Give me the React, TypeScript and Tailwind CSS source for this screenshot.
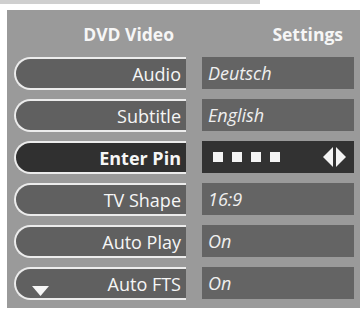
const rows = [
  { label: 'Audio', value: 'Deutsch' },
  { label: 'Subtitle', value: 'English' },
  { label: 'Enter Pin', value: '', active: true },
  { label: 'TV Shape', value: '16:9' },
  { label: 'Auto Play', value: 'On' },
  { label: 'Auto FTS', value: 'On', more: true },
];

function PinValue() {
  return (
    <div className="flex h-full items-center justify-between pl-[11px] pr-[8px]">
      <div className="flex gap-[9px]">
        {[0, 1, 2, 3].map((i) => (
          <div key={i} className="h-[10px] w-[10px] bg-[#f4f4f4]" />
        ))}
      </div>
      <svg width="23" height="20" viewBox="0 0 23 20">
        <polygon points="0,10 10,0 10,20" fill="#f4f4f4" />
        <polygon points="13,0 23,10 13,20" fill="#f4f4f4" />
      </svg>
    </div>
  );
}

export default function App() {
  return (
    <div className="h-[310px] w-[362px] overflow-hidden bg-white font-['Open_Sans',sans-serif]">
      {/* top strip */}
      <div className="h-[4px] w-[260px] bg-[#cfcfcf]" />

      <div className="ml-[7px] mt-[6px] w-[353px] bg-[#9a9a9a] pb-[8px] pl-[7px] pr-[6px]">
        {/* header */}
        <div className="flex h-[47px] items-center text-[17.5px] font-bold leading-[24px] text-[#f6f6f6]">
          <div className="w-[172px] pr-[12px] text-right">DVD Video</div>
          <div className="ml-[16px] w-[152px] pr-[11px] text-right">Settings</div>
        </div>

        {/* menu rows */}
        <div className="flex flex-col gap-[9px]">
          {rows.map((row) => (
            <div key={row.label} className="flex h-[33px] items-start">
              <div
                className={`flex h-[33px] w-[172px] items-center rounded-l-full border-2 border-r-0 border-[#ececec] pr-[5px] text-[18px] leading-none text-[#f6f6f6] ${
                  row.active ? 'bg-[#303030] font-bold' : 'bg-[#606060]'
                }`}
              >
                {row.more && (
                  <svg
                    width="17"
                    height="10"
                    viewBox="0 0 17 10"
                    className="mb-[2px] ml-[16px] self-end"
                  >
                    <polygon points="0,0 17,0 8.5,10" fill="#f6f6f6" />
                  </svg>
                )}
                <span className="ml-auto">{row.label}</span>
              </div>
              <div
                className={`ml-[16px] h-[32px] w-[152px] ${
                  row.active ? 'bg-[#323232]' : 'bg-[#646464]'
                }`}
              >
                {row.active ? (
                  <PinValue />
                ) : (
                  <div className="flex h-full items-center pl-[6px] text-[18px] italic leading-none text-[#efefef]">
                    {row.value}
                  </div>
                )}
              </div>
            </div>
          ))}
        </div>
      </div>
    </div>
  );
}
